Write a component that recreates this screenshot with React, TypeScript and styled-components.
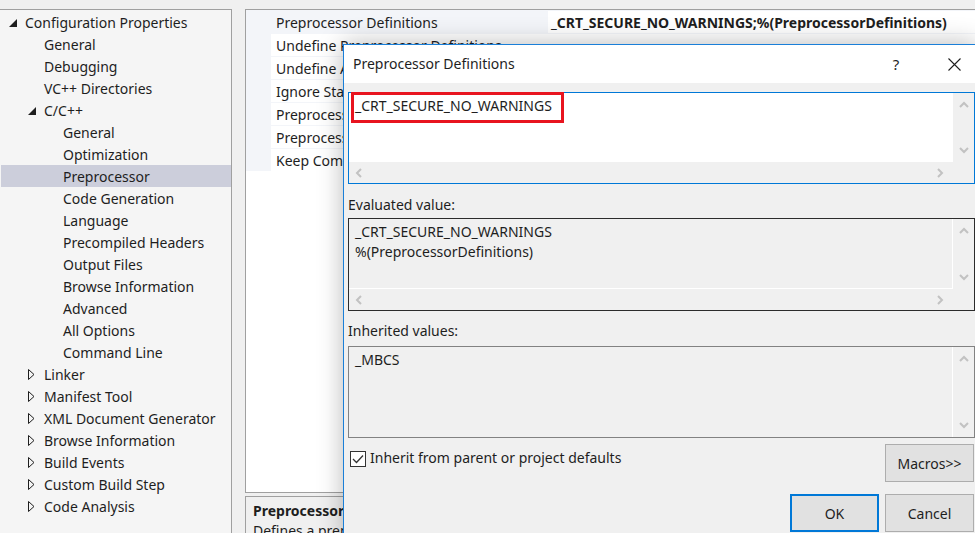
import React from 'react';
import styled, { createGlobalStyle } from 'styled-components';

const FONT = `"Noto Sans", "Open Sans", "DejaVu Sans", sans-serif`;

const Global = createGlobalStyle`
  html, body { margin: 0; padding: 0; background: #f0f0f0; }
  * { box-sizing: border-box; }
`;

const Screen = styled.div`
  position: relative;
  width: 975px;
  height: 533px;
  overflow: hidden;
  background: #f0f0f0;
  display: flex;
  padding-top: 9px;
  font-family: ${FONT};
  font-size: 14px;
  color: #1e1e1e;
`;

/* ---------- tree ---------- */
const TreePanel = styled.div`
  width: 232px;
  flex-shrink: 0;
  border-top: 1px solid #a0a0a0;
  border-right: 1px solid #a0a0a0;
  background: #f5f5f5;
  padding: 1px 0 0 1px;
`;

const TreeRow = styled.div<{ $level: number; $selected?: boolean }>`
  height: 22px;
  display: flex;
  align-items: center;
  padding-left: ${(p) => 5 + p.$level * 19}px;
  background: ${(p) => (p.$selected ? '#cccedb' : 'transparent')};
  white-space: nowrap;
  line-height: 22px;
`;

const TreeText = styled.span`
  padding-top: 2px;
`;

const IconSlot = styled.span`
  width: 19px;
  flex-shrink: 0;
  display: flex;
  align-items: center;
  padding-left: 3px;
  padding-top: 1px;
`;

/* ---------- right column ---------- */
const RightCol = styled.div`
  flex: 1;
  margin-left: 13px;
  display: flex;
  flex-direction: column;
  gap: 3px;
  min-width: 0;
`;

const PropGrid = styled.div`
  height: 484px;
  flex-shrink: 0;
  border: 1px solid #a0a0a0;
  border-right: none;
  background: #ffffff;
`;

const PropRows = styled.div`
  display: flex;
  flex-direction: column;
  gap: 1px;
  padding-top: 1px;
  background: #f3f5f9;
`;

const PropRow = styled.div`
  display: grid;
  grid-template-columns: 25px 277px 1fr;
  height: 22px;
  line-height: 22px;
  white-space: nowrap;
`;

const Gutter = styled.div`
  background: #f3f5f9;
`;

const NameCell = styled.div<{ $active?: boolean }>`
  background: ${(p) => (p.$active ? '#f3f5f9' : '#ffffff')};
  padding: 1px 0 0 5px;
  overflow: hidden;
`;

const ValueCell = styled.div<{ $bold?: boolean }>`
  background: #ffffff;
  padding: 1px 0 0 3px;
  font-weight: ${(p) => (p.$bold ? 700 : 400)};
  overflow: hidden;
`;

const DescPane = styled.div`
  flex: 1;
  border: 1px solid #a0a0a0;
  border-right: none;
  background: #f0f0f0;
  padding: 4px 0 0 7px;
  line-height: 20px;
  white-space: nowrap;
`;

const DescTitle = styled.div`
  font-weight: 700;
`;

/* ---------- dialog ---------- */
const Dialog = styled.div`
  position: absolute;
  left: 343px;
  top: 44px;
  width: 634px;
  height: 500px;
  border: 1px solid #1a7fd8;
  background: #f0f0f0;
  box-shadow: 0 0 24px rgba(0, 0, 0, 0.28);
  display: flex;
  flex-direction: column;
`;

const TitleBar = styled.div`
  height: 38px;
  flex-shrink: 0;
  background: #ffffff;
  display: flex;
  align-items: center;
  padding-left: 9px;
`;

const TitleText = styled.div`
  flex: 1;
  padding-bottom: 1px;
`;

const TitleButton = styled.div<{ $gap?: number }>`
  width: 44px;
  height: 38px;
  display: flex;
  align-items: center;
  justify-content: center;
  margin-right: ${(p) => p.$gap ?? 0}px;
  font-size: 15px;
`;

const Body = styled.div`
  flex: 1;
  display: flex;
  flex-direction: column;
  padding: 9px 0 0 4px;
`;

const EditBox = styled.div<{ $border: string; $hScroll?: boolean }>`
  position: relative;
  width: 627px;
  flex-shrink: 0;
  border: 1px solid ${(p) => p.$border};
  display: grid;
  grid-template-columns: 1fr 21px;
  grid-template-rows: ${(p) => (p.$hScroll ? '1fr 21px' : '1fr')};
`;

const EditContent = styled.div<{ $white?: boolean; $divider?: boolean; $bottomDivider?: boolean }>`
  background: ${(p) => (p.$white ? '#ffffff' : '#f0f0f0')};
  border-right: ${(p) => (p.$divider ? '1px solid #ffffff' : 'none')};
  border-bottom: ${(p) => (p.$bottomDivider ? '1px solid #ffffff' : 'none')};
  padding: 3px 0 0 6px;
  line-height: 20px;
  white-space: nowrap;
`;

const VScroll = styled.div<{ $pad: number }>`
  background: #f0f0f0;
  display: flex;
  flex-direction: column;
  justify-content: space-between;
  align-items: center;
  padding: ${(p) => p.$pad}px 0;
`;

const HScroll = styled.div`
  background: #f0f0f0;
  display: flex;
  justify-content: space-between;
  align-items: center;
  padding: 0 9px 0 6px;
`;

const Corner = styled.div`
  background: #f0f0f0;
`;

const Highlight = styled.div`
  position: absolute;
  left: 2px;
  top: -1px;
  width: 213px;
  height: 31px;
  border: 3px solid #e8141f;
  pointer-events: none;
`;

const FieldLabel = styled.div<{ $top: number; $bottom: number }>`
  margin: ${(p) => p.$top}px 0 ${(p) => p.$bottom}px 0;
  line-height: 20px;
`;

const OptionRow = styled.div`
  width: 626px;
  display: flex;
  align-items: flex-start;
  justify-content: space-between;
  margin-top: 6px;
`;

const CheckLabel = styled.label`
  display: flex;
  align-items: center;
  gap: 4px;
  margin: 5px 0 0 2px;
  line-height: 20px;
`;

const CheckBox = styled.span`
  width: 16px;
  height: 16px;
  border: 1px solid #333333;
  background: #ffffff;
  display: flex;
  align-items: center;
  justify-content: center;
`;

const CheckText = styled.span`
  margin-top: -1px;
`;

const ButtonRow = styled.div`
  width: 626px;
  display: flex;
  justify-content: flex-end;
  gap: 6px;
  margin-top: 12px;
`;

const Button = styled.div<{ $default?: boolean }>`
  width: 89px;
  height: 38px;
  display: flex;
  align-items: center;
  justify-content: center;
  background: #e1e1e1;
  border: ${(p) => (p.$default ? '2px solid #0078d7' : '1px solid #adadad')};
  font-size: 14px;
`;

/* ---------- icons ---------- */
const Expanded = () => (
  <svg width="8" height="8" viewBox="0 0 8 8">
    <polygon points="8,0 8,8 0,8" fill="#1e1e1e" />
  </svg>
);

const Collapsed = () => (
  <svg width="7" height="11" viewBox="0 0 7 11">
    <polygon points="0.5,0.5 6,5.5 0.5,10.5" fill="none" stroke="#1e1e1e" strokeWidth="1" />
  </svg>
);

const Chevron = ({ dir }: { dir: 'up' | 'down' | 'left' | 'right' }) => {
  const pts =
    dir === 'up'
      ? '1,6 5,2 9,6'
      : dir === 'down'
      ? '1,2 5,6 9,2'
      : dir === 'left'
      ? '6,1 2,5 6,9'
      : '2,1 6,5 2,9';
  const w = dir === 'up' || dir === 'down' ? 10 : 8;
  const h = dir === 'up' || dir === 'down' ? 8 : 10;
  return (
    <svg width={w} height={h} viewBox={`0 0 ${w} ${h}`}>
      <polyline points={pts} fill="none" stroke="#c2c2c2" strokeWidth="2" />
    </svg>
  );
};

const CloseIcon = () => (
  <svg width="13" height="13" viewBox="0 0 13 13">
    <path d="M0.5 0.5 L12.5 12.5 M12.5 0.5 L0.5 12.5" stroke="#1e1e1e" strokeWidth="1.1" fill="none" />
  </svg>
);

const CheckMark = () => (
  <svg width="12" height="10" viewBox="0 0 12 10">
    <polyline points="1,5 4.5,8.5 11,1.5" fill="none" stroke="#333333" strokeWidth="1.3" />
  </svg>
);

type TreeItem = { label: string; level: number; icon?: 'expanded' | 'collapsed'; selected?: boolean };

const tree: TreeItem[] = [
  { label: 'Configuration Properties', level: 0, icon: 'expanded' },
  { label: 'General', level: 1 },
  { label: 'Debugging', level: 1 },
  { label: 'VC++ Directories', level: 1 },
  { label: 'C/C++', level: 1, icon: 'expanded' },
  { label: 'General', level: 2 },
  { label: 'Optimization', level: 2 },
  { label: 'Preprocessor', level: 2, selected: true },
  { label: 'Code Generation', level: 2 },
  { label: 'Language', level: 2 },
  { label: 'Precompiled Headers', level: 2 },
  { label: 'Output Files', level: 2 },
  { label: 'Browse Information', level: 2 },
  { label: 'Advanced', level: 2 },
  { label: 'All Options', level: 2 },
  { label: 'Command Line', level: 2 },
  { label: 'Linker', level: 1, icon: 'collapsed' },
  { label: 'Manifest Tool', level: 1, icon: 'collapsed' },
  { label: 'XML Document Generator', level: 1, icon: 'collapsed' },
  { label: 'Browse Information', level: 1, icon: 'collapsed' },
  { label: 'Build Events', level: 1, icon: 'collapsed' },
  { label: 'Custom Build Step', level: 1, icon: 'collapsed' },
  { label: 'Code Analysis', level: 1, icon: 'collapsed' },
];

const props: { name: string; value: string; active?: boolean }[] = [
  { name: 'Preprocessor Definitions', value: '_CRT_SECURE_NO_WARNINGS;%(PreprocessorDefinitions)', active: true },
  { name: 'Undefine Preprocessor Definitions', value: '' },
  { name: 'Undefine All Preprocessor Definitions', value: 'No' },
  { name: 'Ignore Standard Include Paths', value: 'No' },
  { name: 'Preprocess to a File', value: 'No' },
  { name: 'Preprocess Suppress Line Numbers', value: 'No' },
  { name: 'Keep Comments', value: 'No' },
];

export default function App() {
  return (
    <>
      <Global />
      <Screen>
        <TreePanel>
          {tree.map((t, i) => (
            <TreeRow key={i} $level={t.level} $selected={t.selected}>
              <IconSlot>
                {t.icon === 'expanded' && <Expanded />}
                {t.icon === 'collapsed' && <Collapsed />}
              </IconSlot>
              <TreeText>{t.label}</TreeText>
            </TreeRow>
          ))}
        </TreePanel>

        <RightCol>
          <PropGrid>
            <PropRows>
              {props.map((p, i) => (
                <PropRow key={i}>
                  <Gutter />
                  <NameCell $active={p.active}>{p.name}</NameCell>
                  <ValueCell $bold={p.active}>{p.value}</ValueCell>
                </PropRow>
              ))}
            </PropRows>
          </PropGrid>
          <DescPane>
            <DescTitle>Preprocessor Definitions</DescTitle>
            <div>Defines a preprocessing symbols for your source file. (/D[macro])</div>
          </DescPane>
        </RightCol>

        <Dialog>
          <TitleBar>
            <TitleText>Preprocessor Definitions</TitleText>
            <TitleButton $gap={14}>?</TitleButton>
            <TitleButton>
              <CloseIcon />
            </TitleButton>
          </TitleBar>
          <Body>
            <EditBox $border="#0078d7" $hScroll style={{ height: 92 }}>
              <EditContent $white>_CRT_SECURE_NO_WARNINGS</EditContent>
              <VScroll $pad={8}>
                <Chevron dir="up" />
                <Chevron dir="down" />
              </VScroll>
              <HScroll>
                <Chevron dir="left" />
                <Chevron dir="right" />
              </HScroll>
              <Corner />
              <Highlight />
            </EditBox>

            <FieldLabel $top={11} $bottom={3}>Evaluated value:</FieldLabel>
            <EditBox $border="#2b2b2b" $hScroll style={{ height: 93 }}>
              <EditContent $divider $bottomDivider>
                _CRT_SECURE_NO_WARNINGS
                <br />
                %(PreprocessorDefinitions)
              </EditContent>
              <VScroll $pad={8}>
                <Chevron dir="up" />
                <Chevron dir="down" />
              </VScroll>
              <HScroll>
                <Chevron dir="left" />
                <Chevron dir="right" />
              </HScroll>
              <Corner />
            </EditBox>

            <FieldLabel $top={10} $bottom={5}>Inherited values:</FieldLabel>
            <EditBox $border="#828282" style={{ height: 92 }}>
              <EditContent $divider>_MBCS</EditContent>
              <VScroll $pad={8}>
                <Chevron dir="up" />
                <Chevron dir="down" />
              </VScroll>
            </EditBox>

            <OptionRow>
              <CheckLabel>
                <CheckBox>
                  <CheckMark />
                </CheckBox>
                <CheckText>Inherit from parent or project defaults</CheckText>
              </CheckLabel>
              <Button>Macros&gt;&gt;</Button>
            </OptionRow>

            <ButtonRow>
              <Button $default>OK</Button>
              <Button>Cancel</Button>
            </ButtonRow>
          </Body>
        </Dialog>
      </Screen>
    </>
  );
}
